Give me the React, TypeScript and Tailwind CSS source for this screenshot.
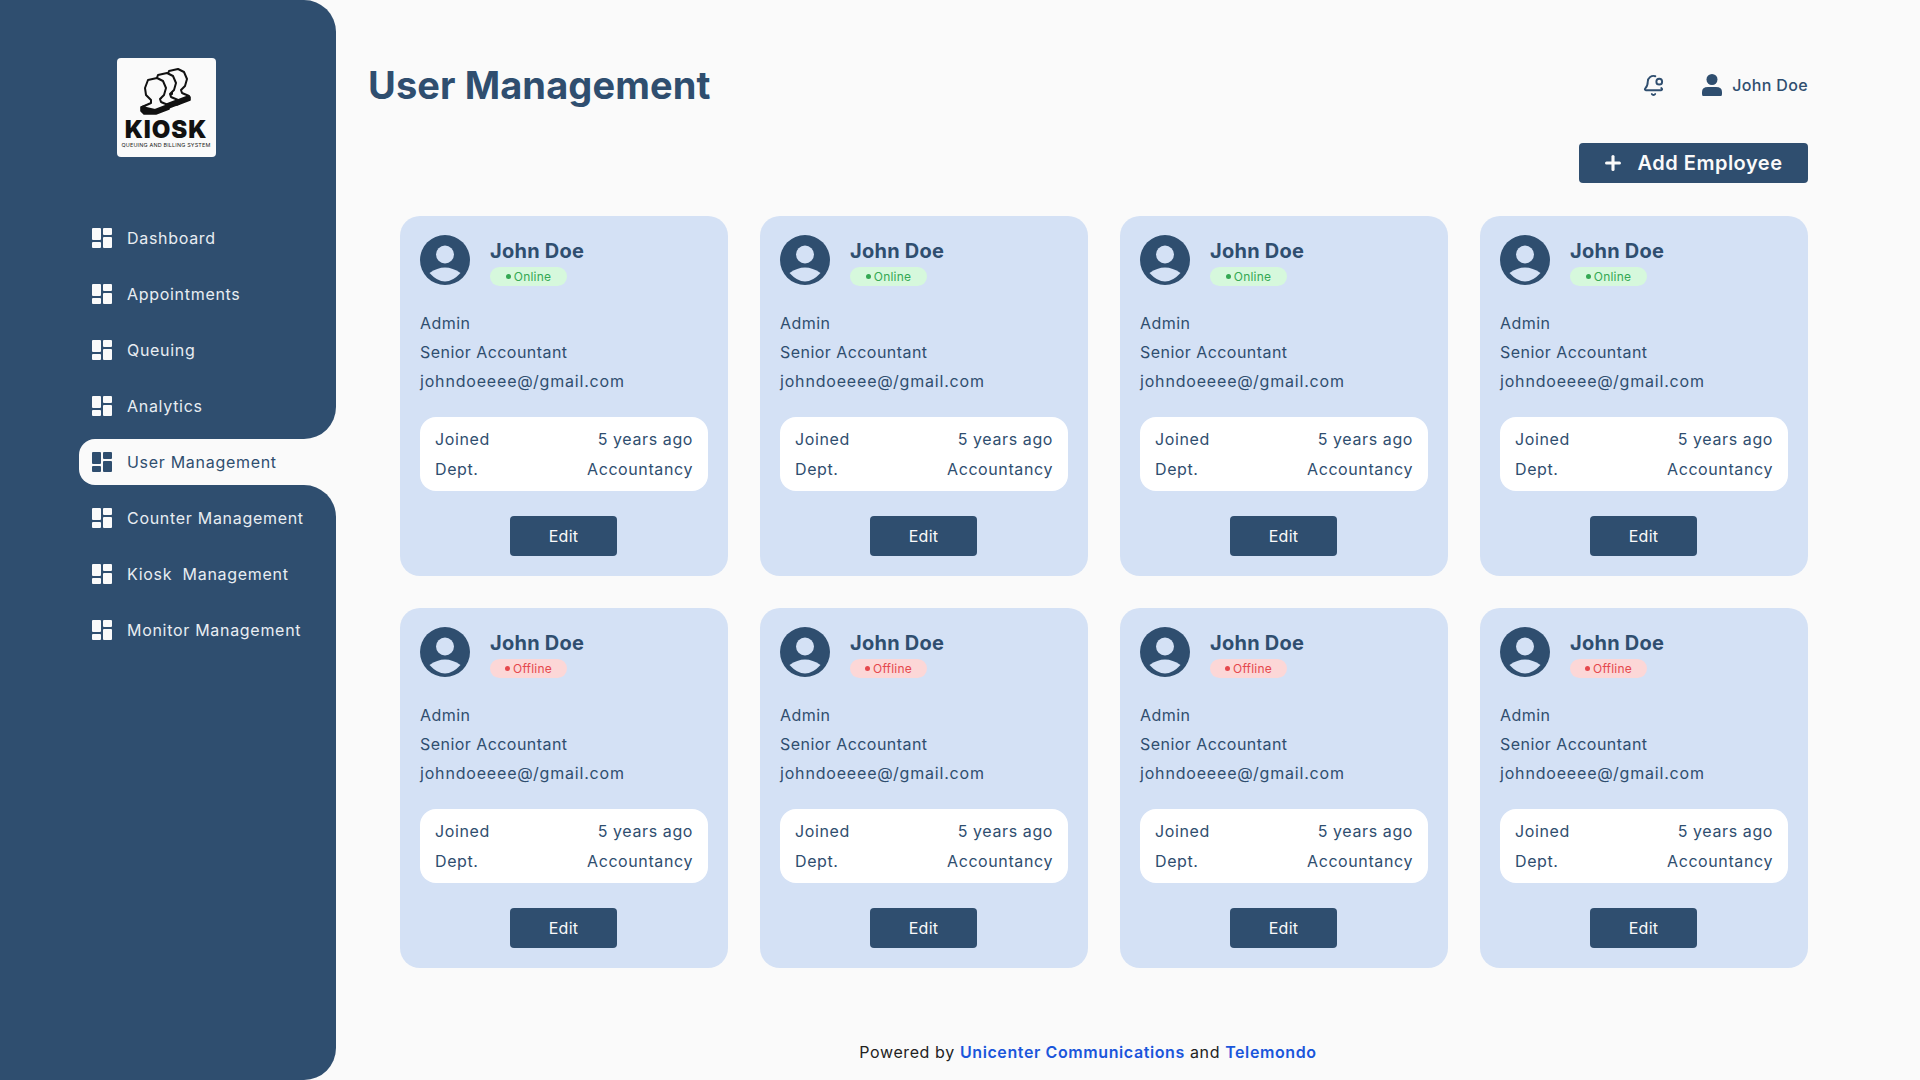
import React from 'react';
import { BellDot, Plus } from 'lucide-react';

const navTop = ['Dashboard', 'Appointments', 'Queuing', 'Analytics'];
const navBottom = ['Counter Management', 'Kiosk\u00a0 Management', 'Monitor Management'];

const GridIcon = ({ active = false }: { active?: boolean }) => (
  <svg width="20" height="20" viewBox="0 0 20 20" className={active ? 'fill-[#2f4e6f] shrink-0' : 'fill-[#fafafa] shrink-0'}>
    <rect x="0" y="0" width="9" height="12" rx="1" />
    <rect x="11" y="0" width="9" height="7" rx="1" />
    <rect x="0" y="14" width="9" height="6" rx="1" />
    <rect x="11" y="9" width="9" height="11" rx="1" />
  </svg>
);

const NavItem = ({ label }: { label: string }) => (
  <div className="flex h-[46px] items-center gap-[15px] pl-[92px] text-[16px] tracking-[0.7px] text-[#e8edf2]">
    <GridIcon />
    <span>{label}</span>
  </div>
);

const Person = ({ dx, dy }: { dx: number; dy: number }) => (
  <g transform={`translate(${dx} ${dy})`}>
    <path d="M24 49 L34 46 L44 46 L52 48 L52 51 L39 56 L27 56 L24 53 Z" fill="#111" stroke="#111" strokeWidth="1.6" strokeLinejoin="round" />
    <path d="M31 22 L40 20 L46 23 L49 30 L47 37 L43 41 L44 44 L51 47 L38 52 L25 49 L34 45 L34 42 L29 37 L28 30 Z" fill="#fafafa" stroke="#111" strokeWidth="2" strokeLinejoin="round" />
  </g>
);

const Logo = () => (
  <div className="flex h-[99px] w-[99px] flex-col items-center overflow-hidden rounded-[4px] bg-[#fafafa]">
    <svg width="99" height="60" viewBox="0 0 99 60" className="shrink-0">
      <Person dx={21} dy={-9} />
      <Person dx={10} dy={-5} />
      <Person dx={0} dy={0} />
    </svg>
    <div className="mt-[3px] text-[24px] font-black leading-[18px] tracking-[0.9px] text-[#111]">KIOSK</div>
    <div className="mt-[3px] whitespace-nowrap text-[5.4px] leading-[6px] tracking-[0.2px] text-[#222]">QUEUING AND BILLING SYSTEM</div>
  </div>
);

const Avatar = () => (
  <svg width="50" height="50" viewBox="0 0 50 50" className="shrink-0">
    <circle cx="25" cy="25" r="25" fill="#2f4e6f" />
    <circle cx="25" cy="19.5" r="9" fill="#d4e1f5" />
    <path d="M9.5 38 Q25 27 40.5 38 Q25 55 9.5 38 Z" fill="#d4e1f5" />
  </svg>
);

const UserCard = ({ online }: { online: boolean }) => (
  <div className="flex h-[360px] flex-col rounded-[20px] bg-[#d4e1f5] px-[20px] pt-[19px] text-[#2f4e6f]">
    <div className="flex h-[50px] items-start gap-[20px]">
      <Avatar />
      <div className="flex flex-col pt-[1px]">
        <div className="text-[20px] font-bold leading-[31px] tracking-[0.25px]">John Doe</div>
        <div
          className={`flex h-[19px] w-[77px] items-center justify-center gap-[3px] rounded-full text-[12px] tracking-[0.2px] ${
            online ? 'bg-[#d6f8dc] text-[#34a853]' : 'bg-[#fcd7d7] text-[#e5484d]'
          }`}
        >
          <span className={`h-[5px] w-[5px] rounded-full ${online ? 'bg-[#34a853]' : 'bg-[#e5484d]'}`} />
          {online ? 'Online' : 'Offline'}
        </div>
      </div>
    </div>
    <div className="mt-[26px] flex flex-col gap-[5px] text-[16px] leading-[24px] tracking-[0.45px]">
      <div>Admin</div>
      <div>Senior Accountant</div>
      <div className="tracking-[0.82px]">johndoeeee@/gmail.com</div>
    </div>
    <div className="mt-[24px] flex flex-col gap-[6px] rounded-[16px] bg-white px-[15px] py-[10px] text-[16px] leading-[24px] tracking-[0.6px]">
      <div className="flex justify-between">
        <span>Joined</span>
        <span>5 years ago</span>
      </div>
      <div className="flex justify-between">
        <span>Dept.</span>
        <span>Accountancy</span>
      </div>
    </div>
    <button className="ml-[90px] mt-[25px] h-[40px] w-[107px] rounded-[4px] bg-[#2f4e6f] text-[16px] tracking-[0.3px] text-[#fafafa]">Edit</button>
  </div>
);

export default function App() {
  return (
    <div className="flex h-[1080px] w-[1920px] overflow-hidden bg-[#fafafa] [font-family:Inter,sans-serif]">
      {/* Sidebar */}
      <aside className="flex h-full w-[336px] shrink-0 flex-col">
        <div className="h-[439px] rounded-r-[32px] bg-[#2f4e6f]">
          <div className="flex justify-center pr-[4px] pt-[58px]">
            <Logo />
          </div>
          <div className="mt-[58px] flex flex-col gap-[10px]">
            {navTop.map((n) => (
              <NavItem key={n} label={n} />
            ))}
          </div>
        </div>
        <div className="h-[46px] bg-[#2f4e6f] pl-[79px]">
          <div className="flex h-full items-center gap-[15px] rounded-l-[16px] bg-[#fafafa] pl-[13px] text-[16px] tracking-[0.7px] text-[#2f4e6f]">
            <GridIcon active />
            <span>User Management</span>
          </div>
        </div>
        <div className="flex-1 rounded-r-[32px] bg-[#2f4e6f] pt-[10px]">
          <div className="flex flex-col gap-[10px]">
            {navBottom.map((n) => (
              <NavItem key={n} label={n} />
            ))}
          </div>
        </div>
      </aside>

      {/* Main */}
      <main className="flex min-w-0 flex-1 flex-col pl-[32px] pr-[112px] pt-[63px]">
        <header className="flex h-[44px] items-center justify-between">
          <h1 className="text-[38px] font-bold tracking-[0.1px] text-[#2f4e6f]">User Management</h1>
          <div className="flex items-center text-[#2f4e6f]">
            <BellDot size={23} strokeWidth={2} className="mr-[37px]" />
            <svg width="20" height="22" viewBox="0 0 20 22" className="mr-[10px] fill-[#2f4e6f]">
              <circle cx="10" cy="5.5" r="5.5" />
              <path d="M1 22 Q0 22 0 20 V18 Q0 13 6 13 H14 Q20 13 20 18 V20 Q20 22 19 22 Z" />
            </svg>
            <span className="text-[16px] font-medium tracking-[0.35px]">John Doe</span>
          </div>
        </header>

        <div className="mt-[36px] flex justify-end">
          <button className="flex h-[40px] w-[229px] items-center justify-center gap-[14px] rounded-[4px] bg-[#2f4e6f] pr-[3px] text-[20px] font-semibold tracking-[0.5px] text-[#fafafa]">
            <Plus size={22} strokeWidth={3.4} />
            Add Employee
          </button>
        </div>

        <div className="mt-[33px] grid grid-cols-4 gap-[32px] pl-[32px]">
          {[true, true, true, true, false, false, false, false].map((online, i) => (
            <UserCard key={i} online={online} />
          ))}
        </div>

        <footer className="mt-[72px] text-center text-[16px] leading-[24px] tracking-[0.6px] text-[#222]">
          Powered by <span className="font-semibold text-[#1a56db]">Unicenter Communications</span> and{' '}
          <span className="font-semibold text-[#1a56db]">Telemondo</span>
        </footer>
      </main>
    </div>
  );
}
